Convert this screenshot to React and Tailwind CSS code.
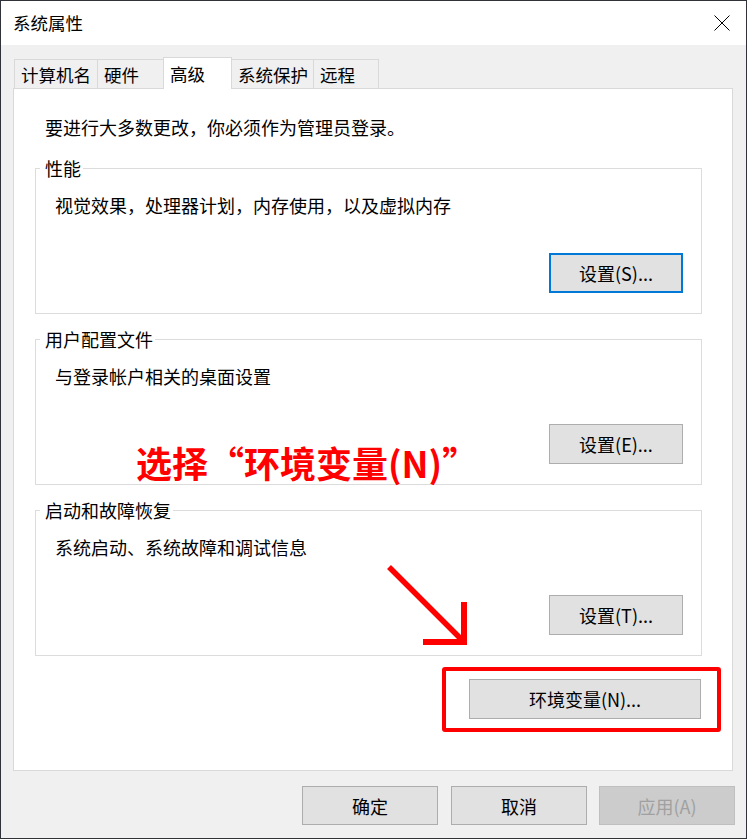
import React from "react";

const font = { fontFamily: '"Noto Sans CJK SC", "Noto Sans", sans-serif' };

function Tab({ label, width, selected, first }) {
  if (selected) {
    return (
      <div
        className={`relative z-10 -mb-px flex h-[32px] items-center border border-b-0 border-[#d9d9d9] bg-white pl-[6px] ${first ? "" : "-ml-px"}`}
        style={{ width }}
      >
        <span className="leading-[20px]">{label}</span>
      </div>
    );
  }
  return (
    <div
      className={`flex h-[29px] items-center border border-b-0 border-[#d9d9d9] bg-[#f0f0f0] pl-[6px] pt-[2px] ${first ? "" : "-ml-px"}`}
      style={{ width }}
    >
      <span className="leading-[20px]">{label}</span>
    </div>
  );
}

function Btn({ children, focused, className = "" }) {
  return (
    <button
      className={`flex items-center justify-center bg-[#e1e1e1] leading-[20px] text-black ${
        focused ? "border-2 border-[#0078d7]" : "border border-[#adadad]"
      } ${className}`}
    >
      {children}
    </button>
  );
}

function Group({ title, desc, btn, mt }) {
  return (
    <fieldset className={`${mt} border border-[#dcdcdc] pl-[4px] pr-[18px] pb-[20px]`}>
      <legend className="pl-[5px] pr-[2px] leading-[20px]">{title}</legend>
      <div className="mt-[17px] pl-[15px] leading-[20px]">{desc}</div>
      <div className="mt-[38px] flex justify-end">{btn}</div>
    </fieldset>
  );
}

export default function App() {
  return (
    <div
      className="relative flex h-[839px] w-[747px] flex-col border border-[#2f3339] bg-[#f0f0f0] text-[18px] text-black"
      style={font}
    >
      {/* Title bar */}
      <div className="flex h-[44px] shrink-0 items-center justify-between bg-white pl-[12px] pr-[16px]">
        <span className="text-[17.5px] leading-[20px]">系统属性</span>
        <svg width="16" height="16" viewBox="0 0 16 16" className="mb-[1px]">
          <path d="M0.5 0.5 L15.5 15.5 M15.5 0.5 L0.5 15.5" stroke="#000" strokeWidth="1" fill="none" />
        </svg>
      </div>

      {/* Body */}
      <div className="flex flex-1 flex-col pt-[12px]">
        <div className="pl-[12px] pr-[13px]">
          <div className="flex h-[31px] items-end pl-px text-[17.5px]">
            <Tab label="计算机名" width={84} first />
            <Tab label="硬件" width={67} />
            <Tab label="高级" width={69} selected />
            <Tab label="系统保护" width={83} />
            <Tab label="远程" width={66} />
          </div>
          <div className="flex h-[683px] flex-col border border-[#d9d9d9] bg-white pl-[21px] pr-[30px] pt-[28px]">
            <div className="pl-[10px] leading-[20px]">要进行大多数更改，你必须作为管理员登录。</div>
            <Group
              mt="mt-[21px]"
              title="性能"
              desc="视觉效果，处理器计划，内存使用，以及虚拟内存"
              btn={<Btn focused className="h-[40px] w-[134px]">设置(S)...</Btn>}
            />
            <Group
              mt="mt-[15px]"
              title="用户配置文件"
              desc="与登录帐户相关的桌面设置"
              btn={<Btn className="h-[40px] w-[134px]">设置(E)...</Btn>}
            />
            <Group
              mt="mt-[15px]"
              title="启动和故障恢复"
              desc="系统启动、系统故障和调试信息"
              btn={<Btn className="h-[40px] w-[134px]">设置(T)...</Btn>}
            />
            <div className="mt-[23px] flex justify-end pr-px">
              <Btn className="h-[40px] w-[232px]">环境变量(N)...</Btn>
            </div>
          </div>
        </div>

        <div className="mt-[15px] flex justify-end gap-[13px] pr-[11px]">
          <Btn className="h-[39px] w-[136px]">确定</Btn>
          <Btn className="h-[39px] w-[136px]">取消</Btn>
          <button className="-ml-px flex h-[39px] w-[136px] items-center justify-center border border-[#bfbfbf] bg-[#cccccc] leading-[20px] text-[#a0a0a0]">
            应用(A)
          </button>
        </div>
      </div>

      {/* Annotations */}
      <div className="absolute left-[135px] top-[441px] text-[36px] font-bold leading-[40px] text-[#ff0000]">
        选择“环境变量(N)”
      </div>
      <svg className="absolute left-[379px] top-[554px]" width="100" height="100" viewBox="0 0 100 100">
        <path d="M9 12 L82 85" stroke="#ff0000" strokeWidth="5.5" strokeLinecap="butt" fill="none" />
        <path d="M84 47 V87 H43" stroke="#ff0000" strokeWidth="6" strokeLinecap="butt" strokeLinejoin="miter" fill="none" />
      </svg>
      <div className="absolute left-[441px] top-[666px] h-[65px] w-[279px] rounded-[3px] border-4 border-[#ff0000]" />
    </div>
  );
}
